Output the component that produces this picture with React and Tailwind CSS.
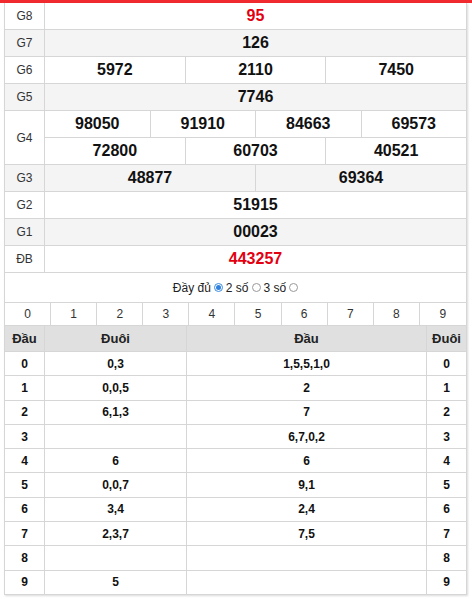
import React from "react";

const B = "border-[#d6d6d6]";

function PrizeRow({ label, gray, children }) {
  return (
    <div className={`flex ${gray ? "bg-[#f4f4f4]" : "bg-white"}`}>
      <div className={`w-[40px] shrink-0 border-r border-b ${B} flex items-center justify-center text-[12px] text-[#333]`}>{label}</div>
      <div className="flex-1 flex flex-col">{children}</div>
    </div>
  );
}

function Cells({ values, red }) {
  return (
    <div className={`flex h-[27px] border-b ${B}`}>
      {values.map((v, i) => (
        <div
          key={i}
          className={`flex-1 basis-0 flex items-center justify-center font-bold text-[16px] ${red ? "text-[#e3000f]" : "text-[#111]"} ${i < values.length - 1 ? `border-r ${B}` : ""}`}
        >
          {v}
        </div>
      ))}
    </div>
  );
}

const loto = [
  ["0", "0,3", "1,5,5,1,0", "0"],
  ["1", "0,0,5", "2", "1"],
  ["2", "6,1,3", "7", "2"],
  ["3", "", "6,7,0,2", "3"],
  ["4", "6", "6", "4"],
  ["5", "0,0,7", "9,1", "5"],
  ["6", "3,4", "2,4", "6"],
  ["7", "2,3,7", "7,5", "7"],
  ["8", "", "", "8"],
  ["9", "5", "", "9"],
];

export default function App() {
  return (
    <div className="w-[472px] min-h-[599px] bg-white" style={{ fontFamily: '"Liberation Sans", Arial, sans-serif' }}>
      <div className="h-[3px] bg-[#f02a2f]" />
      <div className={`ml-[4px] w-[463px] border-l border-r ${B} shadow-[1px_1px_2px_rgba(0,0,0,0.15)]`}>
        <PrizeRow label="G8"><Cells values={["95"]} red /></PrizeRow>
        <PrizeRow label="G7" gray><Cells values={["126"]} /></PrizeRow>
        <PrizeRow label="G6"><Cells values={["5972", "2110", "7450"]} /></PrizeRow>
        <PrizeRow label="G5" gray><Cells values={["7746"]} /></PrizeRow>
        <PrizeRow label="G4">
          <Cells values={["98050", "91910", "84663", "69573"]} />
          <Cells values={["72800", "60703", "40521"]} />
        </PrizeRow>
        <PrizeRow label="G3" gray><Cells values={["48877", "69364"]} /></PrizeRow>
        <PrizeRow label="G2"><Cells values={["51915"]} /></PrizeRow>
        <PrizeRow label="G1" gray><Cells values={["00023"]} /></PrizeRow>
        <PrizeRow label="ĐB"><Cells values={["443257"]} red /></PrizeRow>

        <div className={`h-[30px] flex items-center justify-center gap-[3px] text-[12px] text-[#222] border-b ${B}`}>
          <span>Đầy đủ</span>
          <span className="w-[9px] h-[9px] rounded-full border border-[#3b8de0] flex items-center justify-center bg-white">
            <span className="w-[5px] h-[5px] rounded-full bg-[#2f80e0]" />
          </span>
          <span>2 số</span>
          <span className="w-[9px] h-[9px] rounded-full border border-[#999] bg-white" />
          <span>3 số</span>
          <span className="w-[9px] h-[9px] rounded-full border border-[#999] bg-white" />
        </div>

        <div className={`grid grid-cols-10 h-[23px] border-b ${B}`}>
          {[0, 1, 2, 3, 4, 5, 6, 7, 8, 9].map((d) => (
            <div key={d} className={`flex items-center justify-center text-[12px] text-[#333] ${d < 9 ? `border-r ${B}` : ""}`}>{d}</div>
          ))}
        </div>

        <div className={`flex h-[26px] bg-[#e0e0e0] border-b ${B} font-bold text-[13px] text-[#222]`}>
          <div className={`w-[40px] border-r ${B} flex items-center justify-center`}>Đầu</div>
          <div className={`w-[142px] border-r ${B} flex items-center justify-center`}>Đuôi</div>
          <div className={`w-[240px] border-r ${B} flex items-center justify-center`}>Đầu</div>
          <div className="flex-1 flex items-center justify-center">Đuôi</div>
        </div>

        {loto.map((r, i) => (
          <div key={i} className={`flex h-[24.3px] border-b ${B} font-bold text-[12px] text-[#111]`}>
            <div className={`w-[40px] border-r ${B} flex items-center justify-center`}>{r[0]}</div>
            <div className={`w-[142px] border-r ${B} flex items-center justify-center`}>{r[1]}</div>
            <div className={`w-[240px] border-r ${B} flex items-center justify-center`}>{r[2]}</div>
            <div className="flex-1 flex items-center justify-center">{r[3]}</div>
          </div>
        ))}
      </div>
    </div>
  );
}
